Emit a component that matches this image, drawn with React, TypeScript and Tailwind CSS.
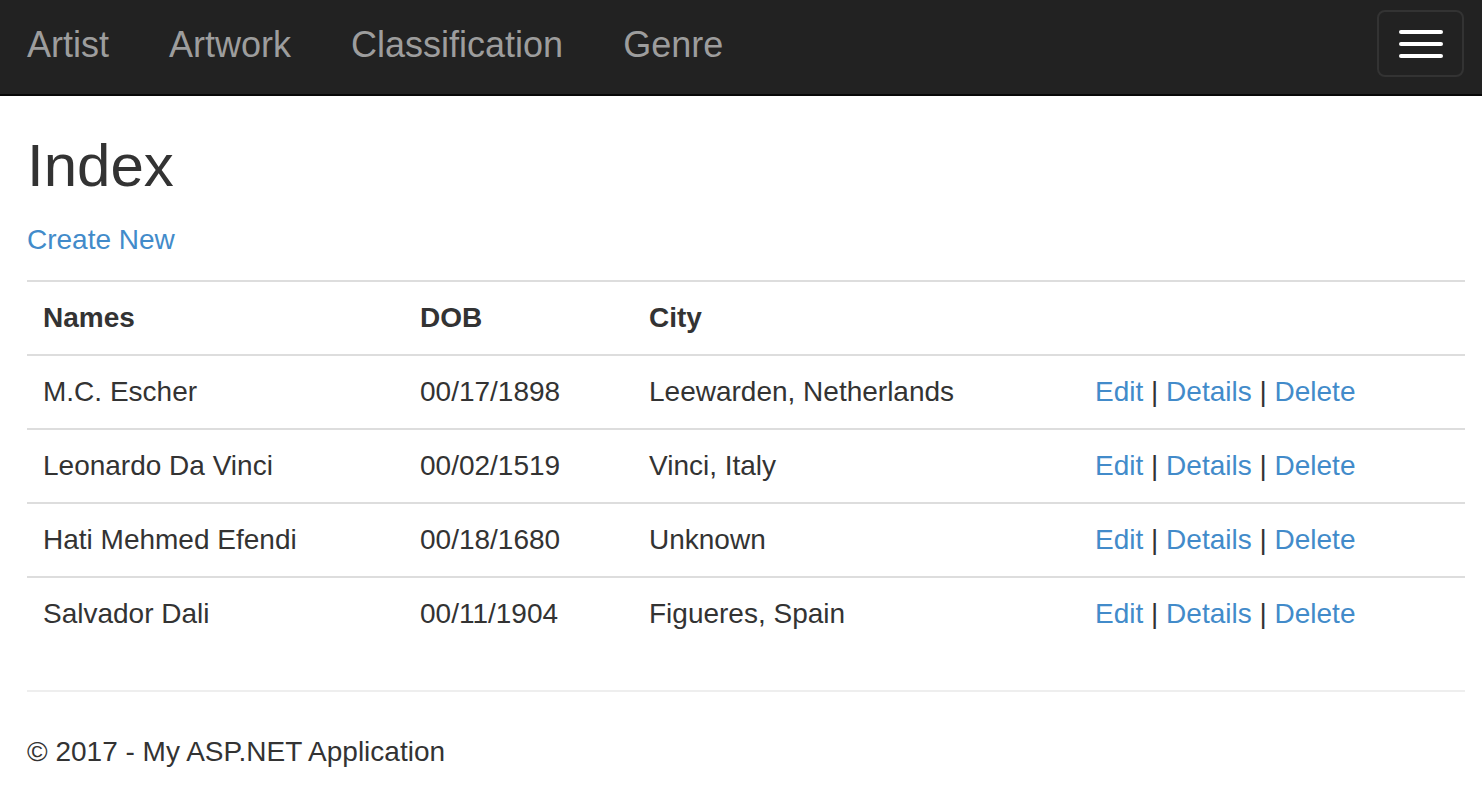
const NAV = ["Artist", "Artwork", "Classification", "Genre"];

const ARTISTS = [
  { name: "M.C. Escher", dob: "00/17/1898", city: "Leewarden, Netherlands" },
  { name: "Leonardo Da Vinci", dob: "00/02/1519", city: "Vinci, Italy" },
  { name: "Hati Mehmed Efendi", dob: "00/18/1680", city: "Unknown" },
  { name: "Salvador Dali", dob: "00/11/1904", city: "Figueres, Spain" },
];

export default function App() {
  return (
    <div className="min-h-screen bg-white text-[#333] font-['Liberation_Sans',Arial,sans-serif]">
      <nav className="h-[96px] bg-[#222] border-b-2 border-[#080808] flex justify-between">
        <ul className="flex pl-[27px]">
          {NAV.map((item) => (
            <li key={item}>
              <a href="#" className="block pt-[25px] pr-[60px] text-[36px] leading-[40px] text-[#9d9d9d]">
                {item}
              </a>
            </li>
          ))}
        </ul>
        <button className="mt-[10px] mr-[18px] w-[87px] h-[67px] border-2 border-[#333] rounded-[8px] flex flex-col items-center justify-center gap-[8px]">
          <span className="block w-[44px] h-[4px] rounded-full bg-white" />
          <span className="block w-[44px] h-[4px] rounded-full bg-white" />
          <span className="block w-[44px] h-[4px] rounded-full bg-white" />
        </button>
      </nav>

      <div className="px-[27px] pr-[17px]">
        <h2 className="mt-[37px] text-[60px] leading-[66px] font-normal">Index</h2>
        <p className="mt-[21px] text-[28px] leading-[40px]">
          <a href="#" className="text-[#428bca]">Create New</a>
        </p>

        <table className="mt-[20px] w-full table-fixed border-collapse text-[28px] leading-[40px]">
          <colgroup>
            <col className="w-[377px]" />
            <col className="w-[229px]" />
            <col className="w-[446px]" />
            <col />
          </colgroup>
          <thead>
            <tr className="border-t-2 border-[#ddd]">
              <th className="text-left font-bold px-[16px] py-[16px]">Names</th>
              <th className="text-left font-bold px-[16px] py-[16px]">DOB</th>
              <th className="text-left font-bold px-[16px] py-[16px]">City</th>
              <th className="px-[16px] py-[16px]" />
            </tr>
          </thead>
          <tbody>
            {ARTISTS.map((a) => (
              <tr key={a.name} className="border-t-2 border-[#ddd]">
                <td className="px-[16px] py-[16px]">{a.name}</td>
                <td className="px-[16px] py-[16px]">{a.dob}</td>
                <td className="px-[16px] py-[16px]">{a.city}</td>
                <td className="px-[16px] py-[16px]">
                  <a href="#" className="text-[#428bca]">Edit</a> |{" "}
                  <a href="#" className="text-[#428bca]">Details</a> |{" "}
                  <a href="#" className="text-[#428bca]">Delete</a>
                </td>
              </tr>
            ))}
          </tbody>
        </table>

        <hr className="mt-[40px] border-0 border-t-2 border-[#eee]" />
        <footer className="mt-[40px] text-[28px] leading-[40px]">
          <p>© 2017 - My ASP.NET Application</p>
        </footer>
      </div>
    </div>
  );
}
